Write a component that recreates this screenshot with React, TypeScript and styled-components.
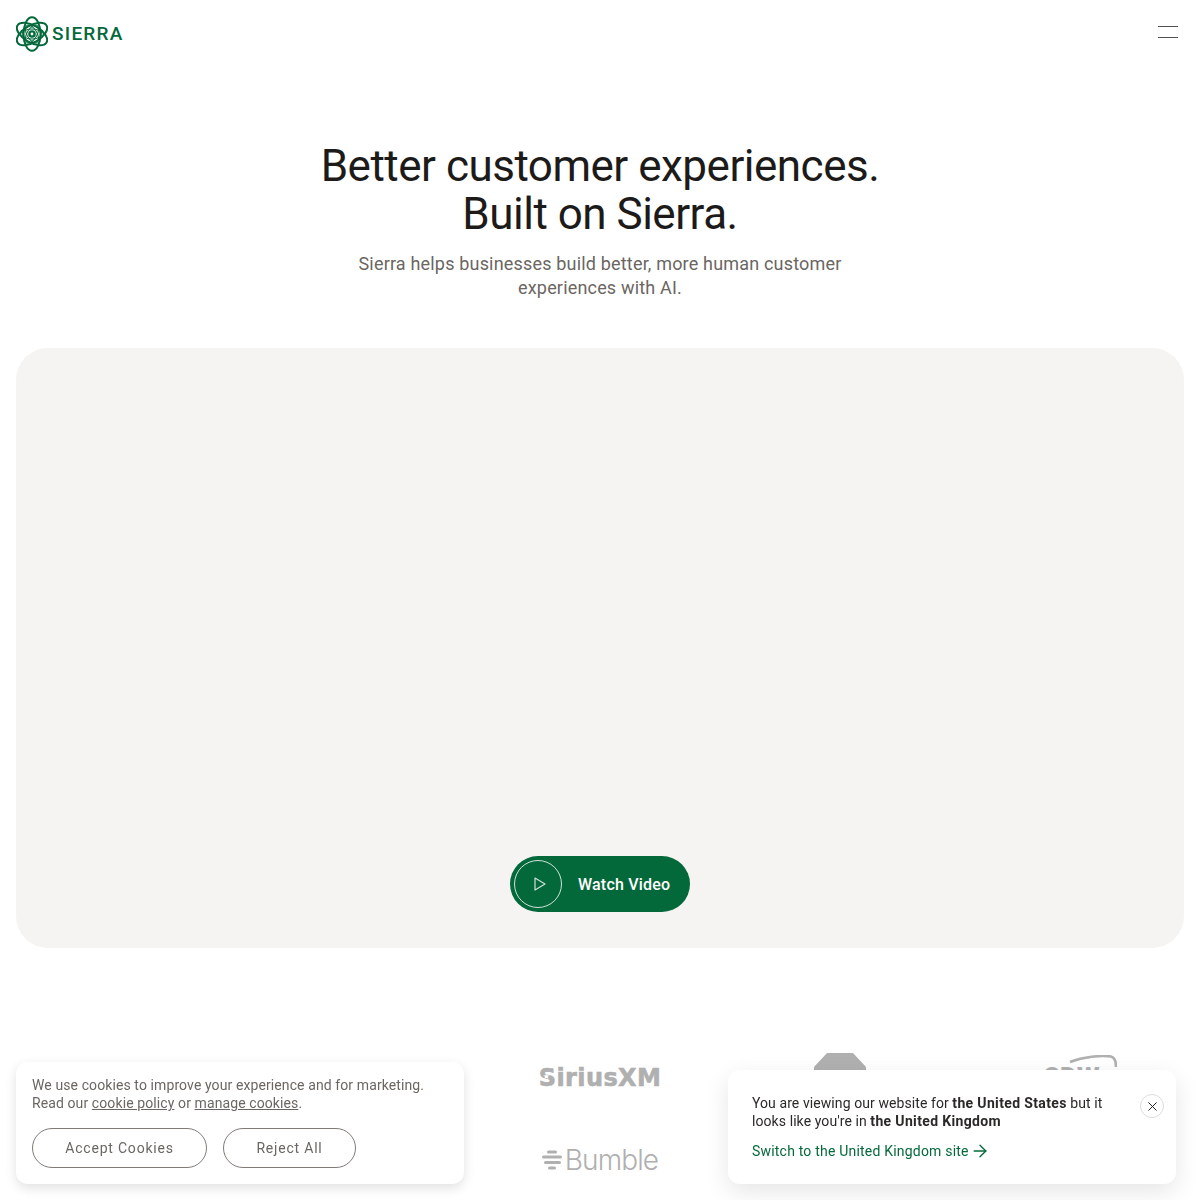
import styled, { createGlobalStyle } from "styled-components";
import { X, ArrowRight } from "lucide-react";

const GlobalStyle = createGlobalStyle`
  html, body {
    margin: 0;
    height: 1200px;
    overflow: hidden;
    background: #fff;
    font-family: "Roboto", "Liberation Sans", sans-serif;
  }
  * { box-sizing: border-box; }
`;

const GREEN = "#04693a";
const LOGO_GREY = "#b0b0b0";

const Header = styled.header`
  height: 68px;
  padding: 16px 16px 0;
  display: flex;
  justify-content: space-between;
  align-items: flex-start;
`;

const LogoLink = styled.a`
  display: flex;
  align-items: center;
  gap: 4px;
  color: ${GREEN};
`;

const LogoText = styled.span`
  font-size: 19px;
  line-height: 36px;
  font-weight: 500;
  letter-spacing: 1.25px;
`;

const MenuButton = styled.button`
  width: 20px;
  height: 12px;
  margin: 10px 6px 0 0;
  padding: 0;
  border: 0;
  border-top: 1.5px solid #55504c;
  border-bottom: 1.5px solid #55504c;
  background: none;
`;

const Hero = styled.section`
  padding-top: 74px;
  text-align: center;
`;

const Title = styled.h1`
  margin: 0;
  font-size: 44px;
  line-height: 48px;
  font-weight: 400;
  letter-spacing: -0.5px;
  color: #1d1b1a;
`;

const Lead = styled.p`
  width: 520px;
  margin: 14px auto 0;
  font-size: 18px;
  line-height: 24px;
  letter-spacing: 0.18px;
  color: #6b6662;
`;

const VideoPanel = styled.div`
  height: 600px;
  margin: 48px 16px 0;
  padding-bottom: 36px;
  border-radius: 32px;
  background: #f5f4f2;
  display: flex;
  justify-content: center;
  align-items: flex-end;
`;

const WatchButton = styled.button`
  width: 180px;
  height: 56px;
  padding: 4px;
  border: 0;
  border-radius: 28px;
  background: ${GREEN};
  display: flex;
  align-items: center;
  gap: 16px;
  color: #fff;
  font: 500 16px "Roboto", sans-serif;
  letter-spacing: 0.2px;
`;

const PlayRing = styled.span`
  width: 48px;
  height: 48px;
  padding-left: 3px;
  border: 1px solid rgba(255, 255, 255, 0.8);
  border-radius: 50%;
  display: flex;
  align-items: center;
  justify-content: center;
`;

const LogoGrid = styled.div`
  margin-top: 87px;
  display: grid;
  grid-template-columns: repeat(5, 240px);
  grid-auto-rows: 83px;
  justify-items: center;
  align-items: center;
  color: ${LOGO_GREY};
`;

const Sirius = styled.span`
  grid-column: 3;
  position: relative;
  margin-top: 2px;
  font: 700 24px "DejaVu Sans", sans-serif;
  letter-spacing: 0.4px;
  -webkit-text-stroke: 0.6px ${LOGO_GREY};
  &::before {
    content: "★";
    position: absolute;
    left: 4px;
    top: 7px;
    font-size: 8px;
    line-height: 12px;
    letter-spacing: 0;
    -webkit-text-stroke: 0;
    color: #fff;
  }
`;

const Bumble = styled.span`
  grid-column: 3;
  display: flex;
  align-items: center;
  gap: 3px;
  font: 300 28px "Inter", sans-serif;
  letter-spacing: -0.9px;
`;

const AdtSlot = styled.span`
  grid-column: 4;
  display: flex;
`;

const Cdw = styled.span`
  grid-column: 5;
  position: relative;
  width: 74px;
  font: 900 26px "Roboto", sans-serif;
`;

const CdwArc = styled.svg`
  position: absolute;
  right: 0;
  top: -7px;
`;

const Toast = styled.div`
  position: fixed;
  bottom: 16px;
  width: 448px;
  background: #fff;
  border-radius: 12px;
  font-size: 14px;
  line-height: 18px;
`;

const CookieCard = styled(Toast)`
  left: 16px;
  height: 122px;
  padding: 14px 16px 16px;
  color: #6b6662;
  letter-spacing: 0.1px;
  box-shadow: 0 4px 12px rgba(0, 0, 0, 0.12);
`;

const CookieText = styled.p`
  margin: 0;
  a { color: inherit; text-decoration: underline; }
`;

const CookieActions = styled.div`
  margin-top: 16px;
  display: flex;
  gap: 16px;
`;

const OutlineButton = styled.button<{ $width: number }>`
  width: ${(p) => p.$width}px;
  height: 40px;
  border: 1px solid #807b77;
  border-radius: 20px;
  background: #fff;
  color: #6b6662;
  font: 400 14px "Roboto", sans-serif;
  letter-spacing: 0.8px;
`;

const RegionCard = styled(Toast)`
  right: 24px;
  height: 114px;
  padding: 24px 12px 0 24px;
  color: #2b2927;
  letter-spacing: 0.08px;
  display: flex;
  justify-content: space-between;
  box-shadow: 0 8px 24px rgba(0, 0, 0, 0.1);
  b { font-weight: 700; letter-spacing: 0.35px; }
`;

const RegionText = styled.p`
  margin: 0;
  width: 360px;
`;

const SwitchLink = styled.a`
  height: 18px;
  margin-top: 12px;
  display: flex;
  align-items: center;
  gap: 1px;
  color: ${GREEN};
  letter-spacing: 0.2px;
`;

const CloseButton = styled.button`
  width: 24px;
  height: 24px;
  padding: 0;
  border: 1px solid #dedcda;
  border-radius: 50%;
  background: #fff;
  color: #222;
  display: flex;
  align-items: center;
  justify-content: center;
`;

function SierraMark() {
  return (
    <svg width="32" height="36" viewBox="2 0 32 36" fill="none" stroke={GREEN}>
      {[0, 60, 120].map((a) => (
        <ellipse key={a} cx="18" cy="18" rx="8.5" ry="16.8" strokeWidth="2" transform={`rotate(${a} 18 18)`} />
      ))}
      {[30, 90, 150].map((a) => (
        <ellipse key={a} cx="18" cy="18" rx="5" ry="10" strokeWidth="1" transform={`rotate(${a} 18 18)`} />
      ))}
      <circle cx="18" cy="18" r="2.6" strokeWidth="2.4" />
    </svg>
  );
}

export default function App() {
  return (
    <>
      <GlobalStyle />
      <Header>
        <LogoLink>
          <SierraMark />
          <LogoText>SIERRA</LogoText>
        </LogoLink>
        <MenuButton aria-label="Menu" />
      </Header>
      <main>
        <Hero>
          <Title>
            Better customer experiences.
            <br />
            Built on Sierra.
          </Title>
          <Lead>Sierra helps businesses build better, more human customer experiences with AI.</Lead>
        </Hero>
        <VideoPanel>
          <WatchButton>
            <PlayRing>
              <svg width="12" height="14" viewBox="0 0 12 14" fill="none" stroke="rgba(255,255,255,0.8)" strokeWidth="1.2">
                <path d="M1 1L11 7L1 13Z" strokeLinejoin="round" />
              </svg>
            </PlayRing>
            Watch Video
          </WatchButton>
        </VideoPanel>
        <LogoGrid>
          <Sirius>SiriusXM</Sirius>
          <AdtSlot>
            <svg width="52" height="48" viewBox="0 0 52 48">
              <path d="M13 0H39L52 14V34L39 48H13L0 34V14Z" fill={LOGO_GREY} />
              <text x="26" y="33" textAnchor="middle" fill="#fff" fontFamily="Roboto" fontWeight="900" fontSize="22">
                ADT
              </text>
            </svg>
          </AdtSlot>
          <Cdw>
            <CdwArc width="48" height="12" viewBox="0 0 48 12" fill="none" stroke={LOGO_GREY} strokeWidth="2.6">
              <path d="M1 7C14 2 32 0 42 1.5C46 2.5 47 6 47 12" />
            </CdwArc>
            CDW
          </Cdw>
          <Bumble>
            <svg width="20" height="20" viewBox="0 0 20 20" fill={LOGO_GREY}>
              <rect x="5" y="0.5" width="10" height="3" rx="1.5" />
              <rect x="0" y="5.5" width="20" height="3" rx="1.5" />
              <rect x="2" y="11" width="17" height="3" rx="1.5" />
              <rect x="6" y="16.5" width="8" height="3" rx="1.5" />
            </svg>
            Bumble
          </Bumble>
        </LogoGrid>
      </main>
      <CookieCard>
        <CookieText>
          We use cookies to improve your experience and for marketing.
          <br />
          Read our <a>cookie policy</a> or <a>manage cookies</a>.
        </CookieText>
        <CookieActions>
          <OutlineButton $width={175}>Accept Cookies</OutlineButton>
          <OutlineButton $width={133}>Reject All</OutlineButton>
        </CookieActions>
      </CookieCard>
      <RegionCard>
        <div>
          <RegionText>
            You are viewing our website for <b>the United States</b> but it looks like you're in{" "}
            <b>the United Kingdom</b>
          </RegionText>
          <SwitchLink>
            Switch to the United Kingdom site <ArrowRight size={20} strokeWidth={1.6} />
          </SwitchLink>
        </div>
        <CloseButton aria-label="Close">
          <X size={15} strokeWidth={1.6} />
        </CloseButton>
      </RegionCard>
    </>
  );
}
